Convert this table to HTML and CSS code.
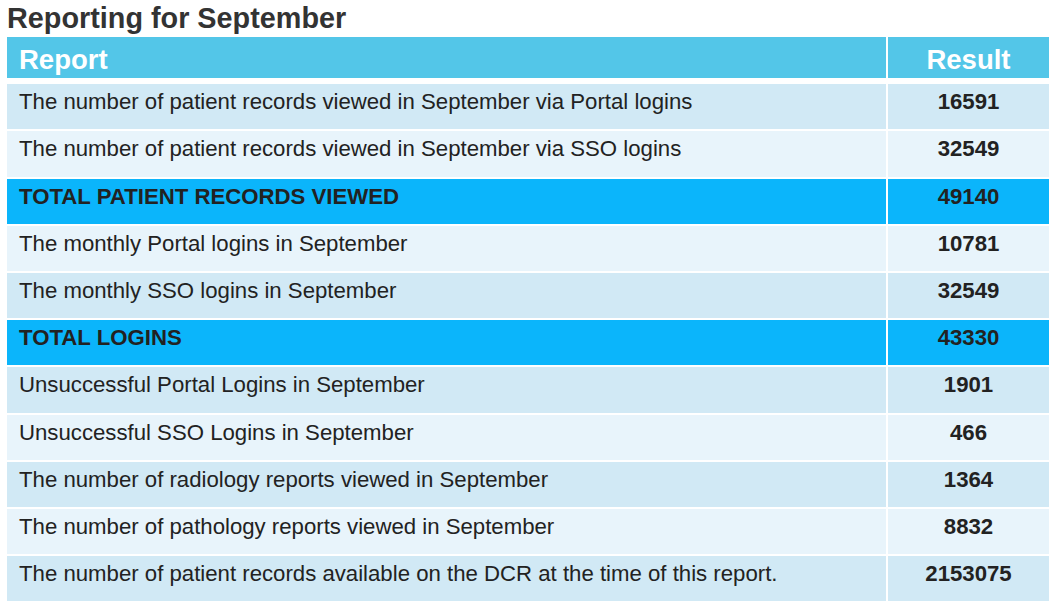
FILE: index.html
```html
<!DOCTYPE html>
<html>
<head>
<meta charset="utf-8">
<link rel="stylesheet" href="styles.css">
</head>
<body>
<div class="page">
  <h1 class="title">Reporting for September</h1>
  <div class="report">
    <div class="cell head label">Report</div>
    <div class="cell head value">Result</div>

    <div class="cell dark label">The number of patient records viewed in September via Portal logins</div>
    <div class="cell dark value">16591</div>

    <div class="cell light label">The number of patient records viewed in September via SSO logins</div>
    <div class="cell light value">32549</div>

    <div class="cell total label">TOTAL PATIENT RECORDS VIEWED</div>
    <div class="cell total value">49140</div>

    <div class="cell light label">The monthly Portal logins in September</div>
    <div class="cell light value">10781</div>

    <div class="cell dark label">The monthly SSO logins in September</div>
    <div class="cell dark value">32549</div>

    <div class="cell total label">TOTAL LOGINS</div>
    <div class="cell total value">43330</div>

    <div class="cell dark label">Unsuccessful Portal Logins in September</div>
    <div class="cell dark value">1901</div>

    <div class="cell light label">Unsuccessful SSO Logins in September</div>
    <div class="cell light value">466</div>

    <div class="cell dark label">The number of radiology reports viewed in September</div>
    <div class="cell dark value">1364</div>

    <div class="cell light label">The number of pathology reports viewed in September</div>
    <div class="cell light value">8832</div>

    <div class="cell dark label">The number of patient records available on the DCR at the time of this report.</div>
    <div class="cell dark value">2153075</div>
  </div>
</div>
</body>
</html>
```

FILE: styles.css
```css
html, body {
  margin: 0;
  padding: 0;
  background: #ffffff;
}

.page {
  padding: 2px 0 0 7px;
  font-family: "Liberation Sans", Arial, sans-serif;
  color: #222222;
}

.title {
  margin: 0;
  font-size: 28.8px;
  line-height: 32px;
  font-weight: bold;
  color: #333333;
}

.report {
  margin-top: 3px;
  display: grid;
  grid-template-columns: 879px 161px;
  grid-auto-rows: 45.2px;
  column-gap: 2px;
  row-gap: 2px;
}

.cell {
  box-sizing: border-box;
  font-size: 22.2px;
  line-height: 25px;
  padding: 5px 11px 0 12px;
}

.value {
  text-align: center;
  font-weight: bold;
  padding-left: 0;
  padding-right: 0;
}

.head {
  height: 41px;
  background: #53c6e8;
  color: #ffffff;
  font-weight: bold;
  font-size: 27.5px;
  line-height: 30px;
  padding-top: 8px;
}

.dark {
  background: #d1e9f5;
}

.light {
  background: #e8f4fb;
}

.total {
  background: #0bb5fb;
  font-weight: bold;
}
```
